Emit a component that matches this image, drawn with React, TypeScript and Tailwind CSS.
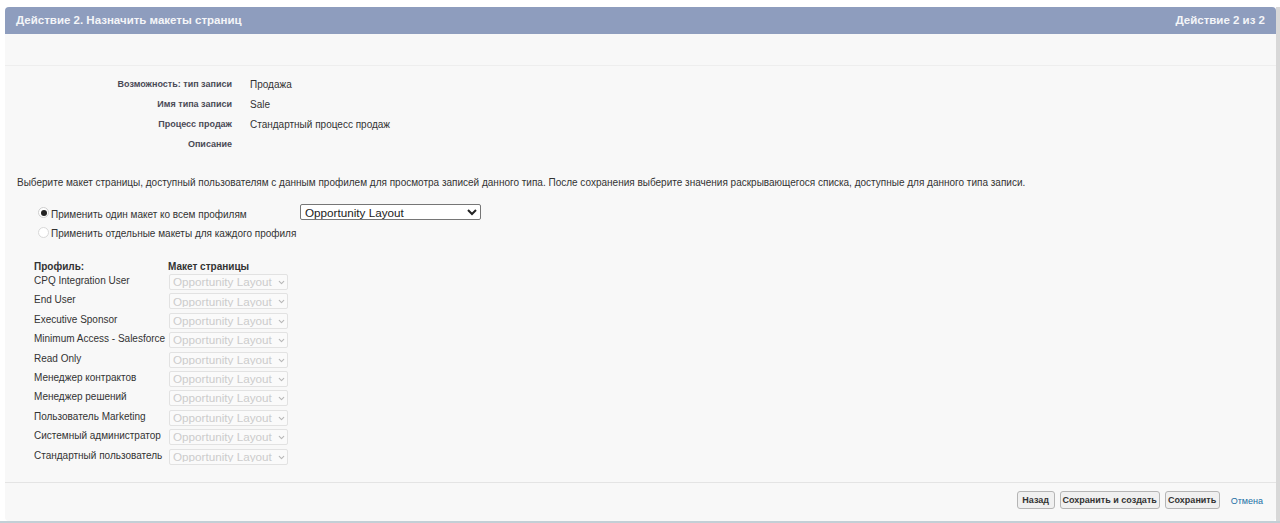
import { ChevronDown } from "lucide-react";

const profiles = [
  "CPQ Integration User",
  "End User",
  "Executive Sponsor",
  "Minimum Access - Salesforce",
  "Read Only",
  "Менеджер контрактов",
  "Менеджер решений",
  "Пользователь Marketing",
  "Системный администратор",
  "Стандартный пользователь",
];

const details = [
  ["Возможность: тип записи", "Продажа"],
  ["Имя типа записи", "Sale"],
  ["Процесс продаж", "Стандартный процесс продаж"],
  ["Описание", ""],
];

export default function App() {
  return (
    <div className="h-[523px] overflow-hidden bg-white pt-[7px] font-['Liberation_Sans',Arial,sans-serif] text-[10px] text-[#333]">
      <div className="flex h-[514px]">
        <div className="ml-[5px] w-[1271px] flex flex-col rounded-t-[4px] rounded-b-[4px] bg-[#f8f8f8]">
          {/* Header */}
          <div className="flex h-[27px] shrink-0 items-center justify-between rounded-t-[4px] bg-[#8e9dbe] pl-[11px] pr-[11px] text-[11.5px] font-bold text-[#f4f5f8]">
            <span>Действие 2. Назначить макеты страниц</span>
            <span>Действие 2 из 2</span>
          </div>
          <div className="h-[32px] shrink-0 border-b border-[#eeeeee]" />

          {/* Record details */}
          <div className="pt-[8px]">
            {details.map(([label, value]) => (
              <div key={label} className="flex h-[20px] items-center">
                <div className="w-[227px] pt-[1px] text-right text-[9px] font-bold text-[#4a4a56]">{label}</div>
                <div className="ml-[18px]">{value}</div>
              </div>
            ))}
          </div>

          <p className="mt-[22px] pl-[12px] leading-[14px]">
            Выберите макет страницы, доступный пользователям с данным профилем для просмотра записей данного типа. После сохранения выберите значения раскрывающегося списка, доступные для данного типа записи.
          </p>

          {/* Layout choice */}
          <div className="mt-[13px] pl-[33px]">
            <div className="flex h-[19px] items-center">
              <span className="flex h-[11px] w-[11px] items-center justify-center rounded-full border border-[#cfcfcf] bg-white">
                <span className="h-[6px] w-[6px] rounded-full bg-[#222]" />
              </span>
              <span className="ml-[2px] w-[249px] pt-[3px]">Применить один макет ко всем профилям</span>
              <select
                defaultValue="Opportunity Layout"
                className="mb-[2px] h-[16px] w-[181px] rounded-[2px] border border-[#767676] bg-white text-[11.7px] leading-none text-[#222]"
              >
                <option>Opportunity Layout</option>
              </select>
            </div>
            <div className="flex h-[20px] items-center">
              <span className="h-[11px] w-[11px] rounded-full border border-[#d8d8d8] bg-white" />
              <span className="ml-[2px] pt-[2px]">Применить отдельные макеты для каждого профиля</span>
            </div>
          </div>

          {/* Profile table */}
          <div className="mt-[17px] pl-[29px]">
            <div className="flex h-[14px] items-center font-bold">
              <div className="w-[134px]">Профиль:</div>
              <div>Макет страницы</div>
            </div>
            {profiles.map((name) => (
              <div key={name} className="flex h-[19.4px]">
                <div className="w-[135px] whitespace-nowrap pt-[1px] leading-[13px]">{name}</div>
                <div className="relative mt-[1px] h-[16px] w-[119px]">
                  <select
                    disabled
                    defaultValue="Opportunity Layout"
                    className="h-full w-full appearance-none rounded-[2px] border border-[#e2e2e2] bg-[#fafafa] pl-[3px] text-[11.7px] leading-none text-[#cccccc] opacity-100"
                  >
                    <option>Opportunity Layout</option>
                  </select>
                  <ChevronDown className="absolute right-[2px] top-[4px] h-[9px] w-[9px] text-[#b8b8b8]" strokeWidth={3} />
                </div>
              </div>
            ))}
          </div>

          {/* Footer */}
          <div className="mt-auto flex h-[39px] shrink-0 items-center justify-end border-t border-[#e4e4e4] pb-[4px] pr-[13px]">
            <button className="h-[18px] w-[38px] rounded-[3px] border border-[#b5b5b5] bg-[#f0f0f0] text-[9px] font-bold leading-none">Назад</button>
            <button className="ml-[5px] h-[18px] w-[100px] rounded-[3px] border border-[#b5b5b5] bg-[#f0f0f0] text-[9px] font-bold leading-none">Сохранить и создать</button>
            <button className="ml-[5px] h-[18px] w-[55px] rounded-[3px] border border-[#b5b5b5] bg-[#f0f0f0] text-[9px] font-bold leading-none">Сохранить</button>
            <a className="ml-[11px] mt-[3px] text-[9px] text-[#1a6fa5]">Отмена</a>
          </div>
        </div>
        <div className="w-[4px] bg-[#d8d8d8]" />
      </div>
      <div className="h-[2px] bg-[#c3cfd6]" />
    </div>
  );
}
